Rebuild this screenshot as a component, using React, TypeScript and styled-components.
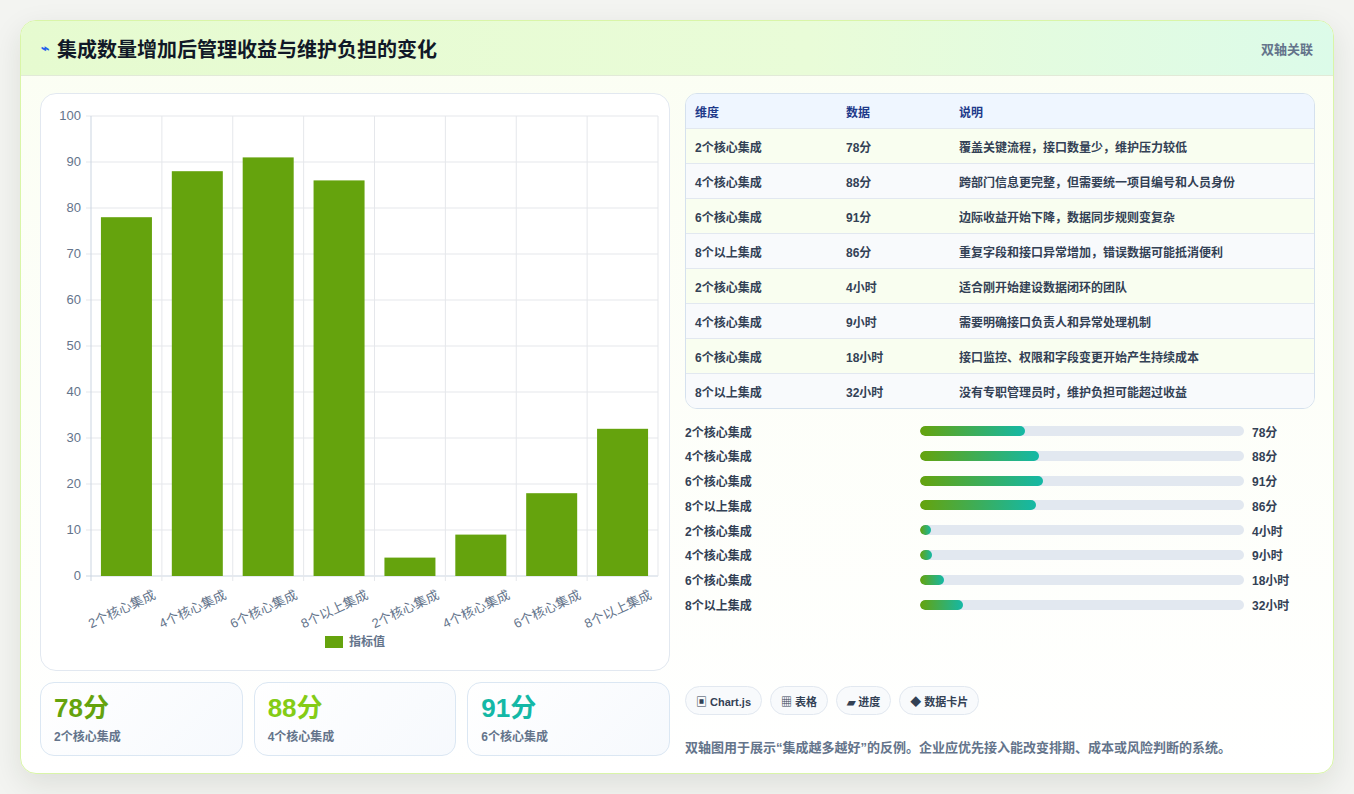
import React from "react";
import styled, { createGlobalStyle } from "styled-components";

const GlobalStyle = createGlobalStyle`
  html, body { margin: 0; padding: 0; background: #f3f4f1; }
  body { font-family: "Liberation Sans", "Noto Sans CJK SC", sans-serif; }
  * { box-sizing: border-box; }
`;

const chartData = [
  { label: "2个核心集成", value: 78 },
  { label: "4个核心集成", value: 88 },
  { label: "6个核心集成", value: 91 },
  { label: "8个以上集成", value: 86 },
  { label: "2个核心集成", value: 4 },
  { label: "4个核心集成", value: 9 },
  { label: "6个核心集成", value: 18 },
  { label: "8个以上集成", value: 32 },
];

const rows = [
  { dim: "2个核心集成", val: "78分", num: 78, note: "覆盖关键流程，接口数量少，维护压力较低" },
  { dim: "4个核心集成", val: "88分", num: 88, note: "跨部门信息更完整，但需要统一项目编号和人员身份" },
  { dim: "6个核心集成", val: "91分", num: 91, note: "边际收益开始下降，数据同步规则变复杂" },
  { dim: "8个以上集成", val: "86分", num: 86, note: "重复字段和接口异常增加，错误数据可能抵消便利" },
  { dim: "2个核心集成", val: "4小时", num: 4, note: "适合刚开始建设数据闭环的团队" },
  { dim: "4个核心集成", val: "9小时", num: 9, note: "需要明确接口负责人和异常处理机制" },
  { dim: "6个核心集成", val: "18小时", num: 18, note: "接口监控、权限和字段变更开始产生持续成本" },
  { dim: "8个以上集成", val: "32小时", num: 32, note: "没有专职管理员时，维护负担可能超过收益" },
];

const Page = styled.div`
  padding: 20px 20px 20px 20px;
  width: 1354px;
  height: 794px;
`;

const Card = styled.div`
  width: 1314px;
  height: 754px;
  border: 1px solid #d9f5a8;
  border-radius: 16px;
  overflow: hidden;
  background: linear-gradient(180deg, #fbfef3 0%, #ffffff 100%);
  box-shadow: 0 10px 30px rgba(30, 40, 20, 0.1);
  display: flex;
  flex-direction: column;
`;

const Header = styled.div`
  height: 55px;
  flex: none;
  display: flex;
  align-items: center;
  justify-content: space-between;
  padding: 0 20px 0 20px;
  background: linear-gradient(90deg, #e6fbd0 0%, #e9fcd8 60%, #dcfbe9 100%);
  border-bottom: 1px solid #e2ead8;
`;

const Title = styled.h1`
  margin: 0;
  font-size: 20px;
  font-weight: 700;
  color: #111827;
  display: flex;
  align-items: center;
  gap: 8px;
`;

const Bolt = styled.span`
  color: #2563eb;
  font-size: 14px;
`;

const HeaderTag = styled.span`
  font-size: 13px;
  font-weight: 700;
  color: #64748b;
`;

const Body = styled.div`
  flex: 1;
  display: grid;
  grid-template-columns: 630px 630px;
  gap: 15px;
  padding: 17px 19px 18px 19px;
`;

const Column = styled.div`
  display: flex;
  flex-direction: column;
  gap: 11px;
`;

const ChartCard = styled.div`
  height: 578px;
  background: #fff;
  border: 1px solid #e2e8f0;
  border-radius: 16px;
`;

const Stats = styled.div`
  display: grid;
  grid-template-columns: repeat(3, 1fr);
  gap: 11px;
`;

const Stat = styled.div`
  height: 74px;
  border: 1px solid #dbe7f3;
  border-radius: 14px;
  background: linear-gradient(135deg, #ffffff 0%, #f6f9fd 100%);
  padding: 10px 13px;
`;

const StatValue = styled.div<{ $color: string }>`
  font-size: 26px;
  font-weight: 700;
  color: ${(p) => p.$color};
  line-height: 30px;
`;

const StatLabel = styled.div`
  font-size: 12px;
  font-weight: 700;
  color: #64748b;
  margin-top: 4px;
`;

const Table = styled.div`
  border: 1px solid #d5e1ee;
  border-radius: 12px;
  overflow: hidden;
`;

const Row = styled.div<{ $bg: string; $head?: boolean }>`
  display: grid;
  grid-template-columns: 151px 113px 1fr;
  height: ${(p) => (p.$head ? 34 : 35)}px;
  align-items: center;
  padding-left: 9px;
  background: ${(p) => p.$bg};
  border-top: ${(p) => (p.$head ? "none" : "1px solid #e2e8f0")};
  font-size: 12px;
  font-weight: 700;
  color: ${(p) => (p.$head ? "#1e3a8a" : "#334155")};
`;

const Bars = styled.div`
  display: flex;
  flex-direction: column;
  gap: 6.8px;
  margin-top: 2px;
`;

const BarRow = styled.div`
  display: grid;
  grid-template-columns: 235px 324px 1fr;
  align-items: center;
  gap: 0;
  height: 18px;
  font-size: 12px;
  font-weight: 700;
  color: #334155;
`;

const Track = styled.div`
  height: 10px;
  border-radius: 5px;
  background: #e2e8f0;
  overflow: hidden;
`;

const Fill = styled.div`
  height: 100%;
  border-radius: 5px;
  background: linear-gradient(90deg, #65a30d 0%, #14b8a6 100%);
`;

const BarValue = styled.span`
  padding-left: 8px;
`;

const Spacer = styled.div`
  flex: 1;
`;

const Tags = styled.div`
  display: flex;
  gap: 8px;
`;

const Tag = styled.span`
  height: 29px;
  padding: 0 10px;
  border: 1px solid #e2e8f0;
  border-radius: 15px;
  background: #f8fafc;
  display: inline-flex;
  align-items: center;
  gap: 4px;
  font-size: 11px;
  font-weight: 700;
  color: #334155;
`;

const Note = styled.p`
  margin: 11px 0 0 0;
  font-size: 13px;
  font-weight: 700;
  color: #64748b;
`;

const BarChart: React.FC = () => {
  const x0 = 50, x1 = 617, y0 = 22, y1 = 482;
  const slot = (x1 - x0) / chartData.length;
  const bw = 51;
  const ticks = [0, 10, 20, 30, 40, 50, 60, 70, 80, 90, 100];
  return (
    <svg width="628" height="576" viewBox="0 0 628 576" fontFamily='"Liberation Sans", "Noto Sans CJK SC", sans-serif'>
      {ticks.map((t) => {
        const y = y1 - (t / 100) * (y1 - y0);
        return (
          <g key={t}>
            <line x1={x0 - 5} x2={x1} y1={y} y2={y} stroke={t === 0 ? "#cbd5e1" : "#e5e7eb"} />
            <text x={x0 - 10} y={y + 4} textAnchor="end" fontSize="13" fill="#64748b">{t}</text>
          </g>
        );
      })}
      {chartData.map((d, i) => (
        <line key={"v" + i} x1={x0 + slot * i} x2={x0 + slot * i} y1={y0} y2={y1 + 5} stroke={i === 0 ? "#cbd5e1" : "#e5e7eb"} />
      ))}
      <line x1={x1} x2={x1} y1={y0} y2={y1} stroke="#e5e7eb" />
      {chartData.map((d, i) => {
        const h = (d.value / 100) * (y1 - y0);
        const cx = x0 + slot * i + slot / 2;
        return (
          <g key={"b" + i}>
            <rect x={cx - bw / 2} y={y1 - h} width={bw} height={h} fill="#65a30d" />
            <text x={cx + 30} y={y1 + 22} textAnchor="end" fontSize="13" fill="#64748b" transform={`rotate(-25 ${cx + 30} ${y1 + 22})`}>{d.label}</text>
          </g>
        );
      })}
      <rect x="284" y="542" width="18" height="12" fill="#65a30d" />
      <text x="308" y="552" fontSize="12" fontWeight="700" fill="#64748b">指标值</text>
    </svg>
  );
};

const App: React.FC = () => (
  <>
    <GlobalStyle />
    <Page>
      <Card>
        <Header>
          <Title><Bolt>⌁</Bolt>集成数量增加后管理收益与维护负担的变化</Title>
          <HeaderTag>双轴关联</HeaderTag>
        </Header>
        <Body>
          <Column>
            <ChartCard><BarChart /></ChartCard>
            <Stats>
              <Stat><StatValue $color="#65a30d">78分</StatValue><StatLabel>2个核心集成</StatLabel></Stat>
              <Stat><StatValue $color="#84cc16">88分</StatValue><StatLabel>4个核心集成</StatLabel></Stat>
              <Stat><StatValue $color="#14b8a6">91分</StatValue><StatLabel>6个核心集成</StatLabel></Stat>
            </Stats>
          </Column>
          <Column>
            <Table>
              <Row $head $bg="#eff6ff"><span>维度</span><span>数据</span><span>说明</span></Row>
              {rows.map((r, i) => (
                <Row key={i} $bg={i % 2 === 0 ? "#f9fef0" : "#f8fafc"}>
                  <span>{r.dim}</span><span>{r.val}</span><span>{r.note}</span>
                </Row>
              ))}
            </Table>
            <Bars>
              {rows.map((r, i) => (
                <BarRow key={i}>
                  <span>{r.dim}</span>
                  <Track><Fill style={{ width: `${Math.max((r.num / 240) * 100, 3.4)}%` }} /></Track>
                  <BarValue>{r.val}</BarValue>
                </BarRow>
              ))}
            </Bars>
            <Spacer />
            <Tags>
              <Tag>▣ Chart.js</Tag>
              <Tag>▦ 表格</Tag>
              <Tag>▰ 进度</Tag>
              <Tag>◆ 数据卡片</Tag>
            </Tags>
            <Note>双轴图用于展示“集成越多越好”的反例。企业应优先接入能改变排期、成本或风险判断的系统。</Note>
          </Column>
        </Body>
      </Card>
    </Page>
  </>
);

export default App;
